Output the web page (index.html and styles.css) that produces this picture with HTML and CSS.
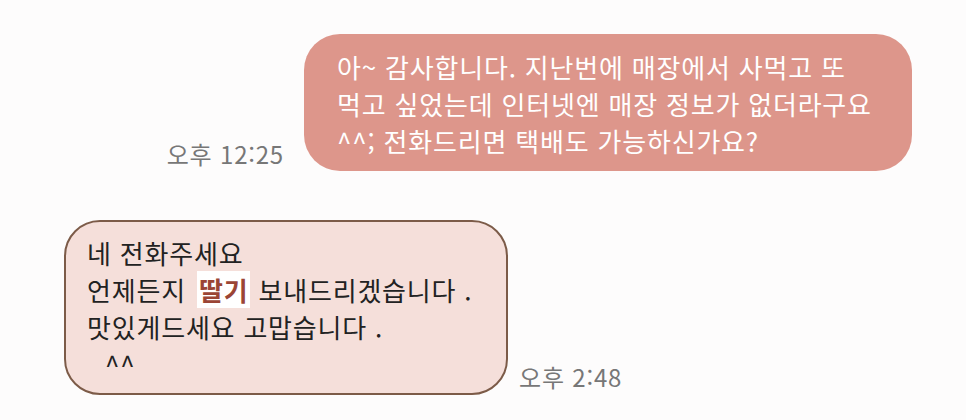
FILE: index.html
```html
<!DOCTYPE html>
<html lang="ko">
<head>
<meta charset="utf-8">
<link rel="stylesheet" href="styles.css">
</head>
<body>
<main class="chat">
  <div class="row row-out">
    <span class="time">오후 12:25</span>
    <div class="bubble bubble-out">
      <p class="line">아~ 감사합니다. 지난번에 매장에서 사먹고 또</p>
      <p class="line">먹고 싶었는데 인터넷엔 매장 정보가 없더라구요</p>
      <p class="line">^^; 전화드리면 택배도 가능하신가요?</p>
    </div>
  </div>
  <div class="row row-in">
    <div class="bubble bubble-in">
      <p class="line">네 전화주세요</p>
      <p class="line">언제든지 <mark class="hl">딸기</mark> 보내드리겠습니다 .</p>
      <p class="line">맛있게드세요 고맙습니다 .</p>
      <p class="line line-caret">^^</p>
    </div>
    <span class="time">오후 2:48</span>
  </div>
</main>
</body>
</html>
```
FILE: styles.css
```css
* { box-sizing: border-box; }
html, body {
  margin: 0;
  padding: 0;
  background: #fdfcfc;
}
body {
  width: 966px;
  height: 420px;
  overflow: hidden;
  font-family: "Noto Sans CJK KR", "Noto Sans", sans-serif;
}
.chat {
  display: flex;
  flex-direction: column;
  gap: 49px;
  padding-top: 34px;
}
.row {
  display: flex;
  align-items: flex-end;
}
.row-out {
  justify-content: flex-end;
  padding-right: 54px;
  gap: 20px;
}
.row-in {
  justify-content: flex-start;
  padding-left: 64px;
  gap: 11px;
}
.time {
  font-size: 24px;
  color: #777777;
  line-height: 30px;
  margin-bottom: 2px;
  letter-spacing: 0.8px;
}
.row-in .time { margin-bottom: 3px; }
.bubble {
  border-radius: 36px;
  font-size: 26px;
  letter-spacing: 0.8px;
}
.line {
  margin: 0;
  line-height: 37px;
  white-space: nowrap;
}
.bubble-out {
  width: 608px;
  height: 137px;
  background: #dd968b;
  color: #ffffff;
  padding: 14px 10px 0 33px;
}
.bubble-in {
  width: 444px;
  height: 175px;
  background: #f5dfda;
  border: 2px solid #7c5b48;
  color: #222222;
  padding: 12px 10px 0 21px;
}
.line-caret { padding-left: 18px; }
.hl {
  display: inline-block;
  background: #ffffff;
  color: #9b4535;
  font-weight: 700;
  line-height: 37px;
  margin-left: 3px;
  padding: 0 2px;
}
```
